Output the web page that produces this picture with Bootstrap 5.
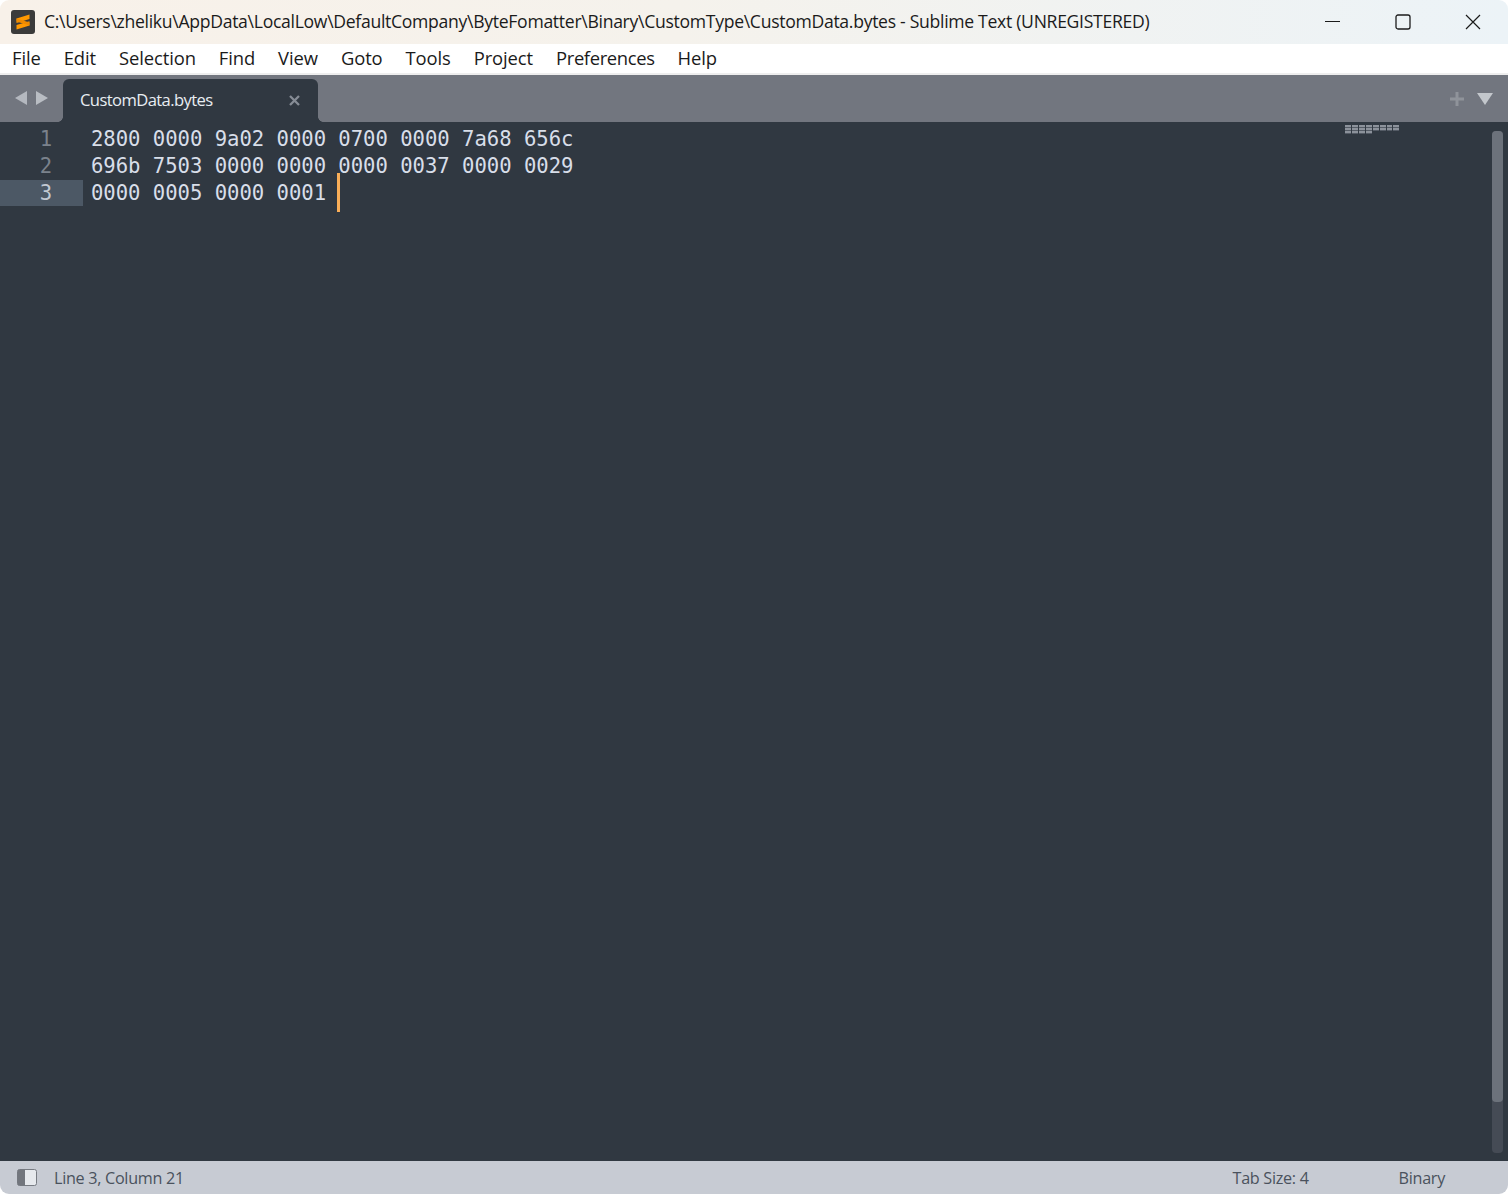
<!DOCTYPE html>
<html lang="en">
<head>
<meta charset="utf-8">
<title>Sublime Text</title>
<link href="https://cdn.jsdelivr.net/npm/bootstrap@5.3.0/dist/css/bootstrap.min.css" rel="stylesheet">
<style>
html,body{height:100%;background:#fff;overflow:hidden}
.win{height:1194px;border-radius:9px;overflow:hidden;font-family:"Open Sans","Noto Sans",sans-serif}
.titlebar{height:44px;background:linear-gradient(90deg,#f8f1e9 0%,#f5f2ec 45%,#ecf3f7 100%);color:#1b1b1b;font-size:17.6px;letter-spacing:-.3px;padding-left:11px}
.title-txt{margin-top:-2px}
.app-logo{width:24px;height:24px;margin-right:9px;flex:none}
.win-ctl svg{display:block}
.ctl-btn{width:70px;height:44px}
.menubar{height:29px;background:#fff;color:#1a1a1a;font-size:18.4px;padding-left:12px;gap:23px;letter-spacing:-.1px;line-height:27px}
.menu-tight{letter-spacing:-.35px}
.sepline{height:2px;background:#eeeeee}
.tabbar{height:47px;background:#72767f}
.tab-nav{width:63px;padding-left:15px;gap:9px;padding-bottom:1px}
.doc-tab{width:255px;height:43px;margin-top:4px;background:#303841;border-radius:6px 6px 0 0;color:#e8edf2;font-size:16.6px;letter-spacing:-.6px;padding:0 18px 0 17px;position:relative}
.doc-tab::before,.doc-tab::after{content:"";position:absolute;bottom:0;width:5px;height:5px}
.doc-tab::before{left:-5px;background:radial-gradient(circle at 0 0,#72767f 4.5px,#303841 5px)}
.doc-tab::after{right:-5px;background:radial-gradient(circle at 100% 0,#72767f 4.5px,#303841 5px)}
.tab-actions{gap:12px;padding-right:15px}
.editor{height:1039px;background:#303841;position:relative;padding-top:3.5px;font-family:"DejaVu Sans Mono",monospace;font-size:20.6px;line-height:27px;color:#d8dee9;letter-spacing:-.03px}
.code-row{height:27px}
.gutter{width:83px;padding-right:31px;text-align:right;color:#7b828c;flex:none}
.gutter-on{color:#c2c9d2}
.code-txt{padding-left:8px;position:relative;white-space:pre}
.row-on .gutter{background:linear-gradient(#4c5865,#4c5865) no-repeat 0 0/100% 26px}
.caret-mark{position:absolute;left:254px;top:-7px;width:3px;height:39px;background:#f9ae58}
.mini-map{position:absolute;left:1345px;top:3px}
.v-track{position:absolute;left:1492px;top:9px;width:11px;height:1022px;background:#454b55;border-radius:4px}
.v-thumb{height:971px;background:#6c727b;border-radius:4px}
.statusbar{height:33px;background:#c7cbd3;color:#4a525d;font-size:16.2px;letter-spacing:-.3px;padding-left:17px}
.status-txt{margin-top:2px}
.status-loc{margin-left:17px}
.status-tab{margin-right:90px}
.status-syn{margin-right:63px}
</style>
</head>
<body>
<div class="win d-flex flex-column">
  <div class="titlebar d-flex align-items-center">
    <svg class="app-logo" viewBox="0 0 24 24"><rect width="24" height="24" rx="3" fill="#3b3b3b"/><path d="M18.5 4.5v4.4L5.5 12.9V8.6zM18.5 11.2v4.3L5.5 19.5v-4.4z" fill="#ff9800"/><path d="M5.5 8.6l13 4v2.9l-13-4.1z" fill="#ef8a00"/></svg>
    <span class="title-txt flex-grow-1 text-nowrap">C:\Users\zheliku\AppData\LocalLow\DefaultCompany\ByteFomatter\Binary\CustomType\CustomData.bytes - Sublime Text (UNREGISTERED)</span>
    <div class="d-flex">
      <div class="ctl-btn d-flex align-items-center justify-content-center"><svg width="16" height="16" viewBox="0 0 16 16"><path d="M0 7.5h15" stroke="#1b1b1b" stroke-width="1.2"/></svg></div>
      <div class="ctl-btn d-flex align-items-center justify-content-center"><svg width="16" height="16" viewBox="0 0 16 16"><rect x="1" y="1" width="14" height="14" rx="2" fill="none" stroke="#1b1b1b" stroke-width="1.3"/></svg></div>
      <div class="ctl-btn d-flex align-items-center justify-content-center"><svg width="16" height="16" viewBox="0 0 16 16"><path d="M1 1l14 14M15 1L1 15" stroke="#1b1b1b" stroke-width="1.2"/></svg></div>
    </div>
  </div>
  <div class="menubar d-flex">
    <span>File</span><span>Edit</span><span>Selection</span><span>Find</span><span>View</span><span>Goto</span><span>Tools</span><span>Project</span><span class="menu-tight">Preferences</span><span>Help</span>
  </div>
  <div class="sepline"></div>
  <div class="tabbar d-flex">
    <div class="tab-nav d-flex align-items-center">
      <svg width="12" height="14" viewBox="0 0 12 14"><path d="M12 0v14L0 7z" fill="#b4b8bf"/></svg>
      <svg width="12" height="14" viewBox="0 0 12 14"><path d="M0 0v14l12-7z" fill="#b9bdc3"/></svg>
    </div>
    <div class="doc-tab d-flex align-items-center justify-content-between">
      <span>CustomData.bytes</span>
      <svg width="11" height="11" viewBox="0 0 11 11"><path d="M1 1l9 9M10 1l-9 9" stroke="#868c95" stroke-width="2.3"/></svg>
    </div>
    <div class="tab-actions d-flex align-items-center ms-auto">
      <svg width="16" height="16" viewBox="0 0 16 16"><path d="M8 1v14M1 8h14" stroke="#8f939a" stroke-width="3"/></svg>
      <svg width="16" height="12" viewBox="0 0 16 12"><path d="M0 0h16L8 12z" fill="#c3c7cc"/></svg>
    </div>
  </div>
  <div class="editor">
    <div class="code-row d-flex"><div class="gutter">1</div><div class="code-txt">2800 0000 9a02 0000 0700 0000 7a68 656c</div></div>
    <div class="code-row d-flex"><div class="gutter">2</div><div class="code-txt">696b 7503 0000 0000 0000 0037 0000 0029</div></div>
    <div class="code-row row-on d-flex"><div class="gutter gutter-on">3</div><div class="code-txt">0000 0005 0000 0001 <span class="caret-mark"></span></div></div>
    <svg class="mini-map" width="54" height="9" viewBox="0 0 54 9" aria-hidden="true">
      <g fill="#8c929b">
        <rect x="0" y="0" width="6" height="2.4"/><rect x="7" y="0" width="6" height="2.4"/><rect x="14" y="0" width="6" height="2.4"/><rect x="21" y="0" width="6" height="2.4"/><rect x="28" y="0" width="6" height="2.4"/><rect x="35" y="0" width="6" height="2.4"/><rect x="42" y="0" width="5" height="2.4"/><rect x="48" y="0" width="6" height="2.4"/>
        <rect x="0" y="3" width="6" height="2.4"/><rect x="7" y="3" width="6" height="2.4"/><rect x="14" y="3" width="6" height="2.4"/><rect x="21" y="3" width="6" height="2.4"/><rect x="28" y="3" width="6" height="2.4"/><rect x="35" y="3" width="6" height="2.4"/><rect x="42" y="3" width="5" height="2.4"/><rect x="48" y="3" width="6" height="2.4"/>
        <rect x="0" y="6" width="6" height="2.4"/><rect x="7" y="6" width="6" height="2.4"/><rect x="14" y="6" width="6" height="2.4"/><rect x="21" y="6" width="6" height="2.4"/>
      </g>
    </svg>
    <div class="v-track"><div class="v-thumb"></div></div>
  </div>
  <div class="statusbar d-flex align-items-center">
    <svg width="20" height="17" viewBox="0 0 20 17"><rect x=".5" y=".5" width="19" height="16" rx="2" fill="#e6e9ed" stroke="#777b82"/><path d="M2.5.5H8v16H2.5a2 2 0 0 1-2-2v-12a2 2 0 0 1 2-2z" fill="#72767d"/></svg>
    <span class="status-txt status-loc flex-grow-1">Line 3, Column 21</span>
    <span class="status-txt status-tab">Tab Size: 4</span>
    <span class="status-txt status-syn">Binary</span>
  </div>
</div>
<script src="https://cdn.jsdelivr.net/npm/bootstrap@5.3.0/dist/js/bootstrap.bundle.min.js"></script>
</body>
</html>
